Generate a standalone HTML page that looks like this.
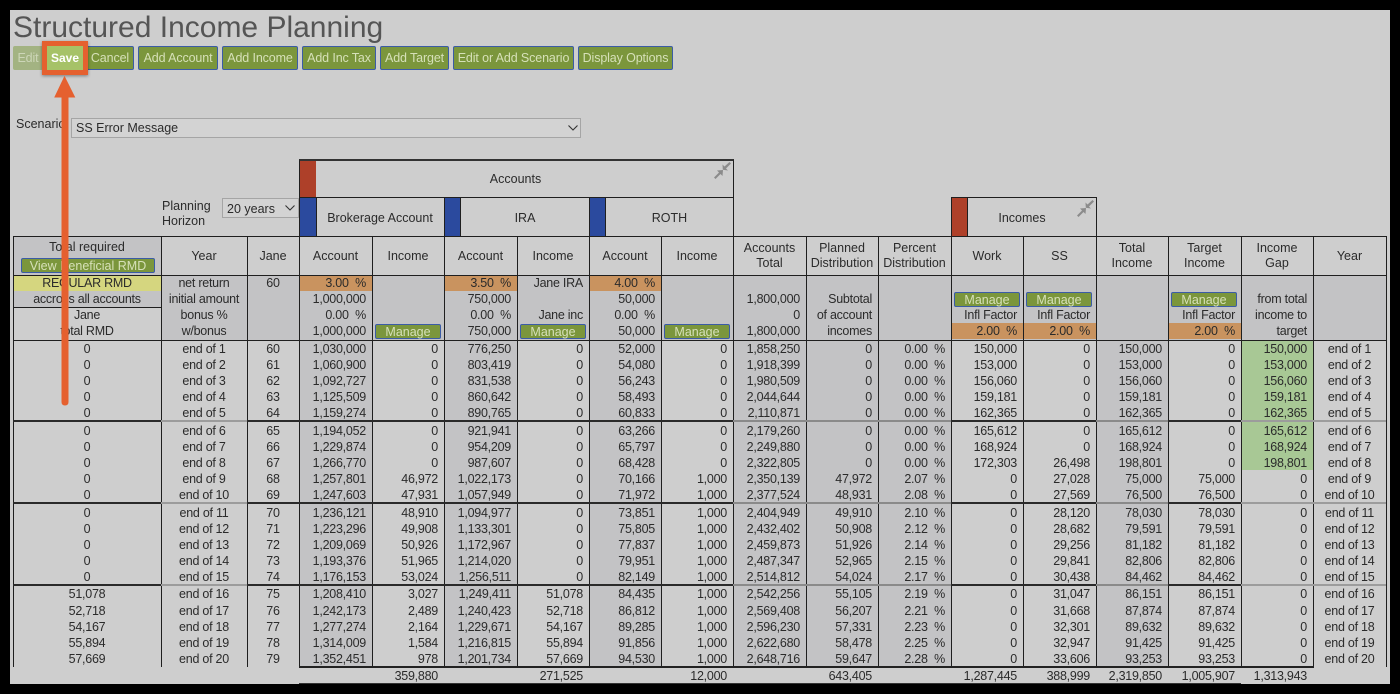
<!DOCTYPE html>
<html><head><meta charset="utf-8"><title>Structured Income Planning</title>
<style>
*{box-sizing:border-box}
html,body{margin:0;padding:0;background:#000;width:1400px;height:694px;overflow:hidden}
body{font-family:"Liberation Sans",sans-serif;font-size:12px;color:#2b2b2b}
#p{position:absolute;left:10px;top:10px;width:1380px;height:674px;background:#cecece}
.a{position:absolute}
.b{position:absolute;top:46px;height:24px;background:#7b963c;border:1.5px solid #3b5ca6;border-radius:2px;color:#d6e0b8;font-size:12.5px;letter-spacing:-.12px;line-height:23px;text-align:center;white-space:nowrap}
.m{position:absolute;height:15px;width:66px;background:#7b963c;border:1.5px solid #3b5ca6;border-radius:2px;color:#d6e0b8;font-size:12.5px;line-height:14px;text-align:center}
.s{position:absolute;background:#c3c3c5}
.o{position:absolute;background:#c9935f}
.v{position:absolute;top:236px;height:431px;width:1px;background:#1f1f1f}
.h{position:absolute;height:2px}
.r{position:absolute;left:13px;height:16px;line-height:16px;font-size:12.5px;letter-spacing:-.25px;display:grid;grid-template-columns:148px 86px 52px 73px 72px 73px 72px 72px 72px 73px 72px 73px 72px 73px 72px 73px 72px 73px;white-space:pre}
.r i{font-style:normal;text-align:right;padding-right:6px}
.r i:nth-child(1),.r i:nth-child(2),.r i:nth-child(3),.r i:nth-child(18){text-align:center;padding-right:0}
.t{position:absolute;text-align:center;font-size:12.5px;line-height:14px;white-space:nowrap}
.hd{position:absolute;top:237px;height:38px;display:flex;align-items:center;justify-content:center;text-align:center;font-size:12.5px;line-height:15px}
</style></head><body>
<div id="p"></div>

<div class="a" style="left:13px;top:10px;font-size:30px;line-height:36px;color:#555;white-space:nowrap">Structured Income Planning</div>

<div class="b" style="left:13px;width:30px;background:#a3b382;border-color:#a3b382;color:#cdd6b8">Edit</div>
<div class="b" style="left:86px;width:48px">Cancel</div>
<div class="b" style="left:138px;width:80px">Add Account</div>
<div class="b" style="left:222px;width:76px">Add Income</div>
<div class="b" style="left:302px;width:74px">Add Inc Tax</div>
<div class="b" style="left:380px;width:69px">Add Target</div>
<div class="b" style="left:453px;width:121px">Edit or Add Scenario</div>
<div class="b" style="left:578px;width:95px">Display Options</div>
<div class="a" style="left:42px;top:41px;width:46px;height:34px;border:5px solid #e5602f;background:#a6c267;color:#fff;font-weight:bold;font-size:12px;line-height:24px;text-align:center;box-shadow:0 1px 3px rgba(0,0,0,.4)">Save</div>

<div class="a" style="left:16px;top:117px;font-size:12.5px;line-height:15px">Scenario</div>
<div class="a" style="left:71px;top:118px;width:510px;height:20px;background:#d3d3d3;border:1px solid #a5a5a5;font-size:12.5px;line-height:19px;padding-left:4px">SS Error Message</div>
<svg class="a" style="left:567px;top:124px" width="12" height="8"><path d="M1.500 1.500L6 6L10.500 1.500" fill="none" stroke="#333" stroke-width="1.100"/></svg>

<div class="a" style="left:162px;top:199px;font-size:12.5px;line-height:14.5px">Planning<br>Horizon</div>
<div class="a" style="left:222px;top:198px;width:77px;height:20px;background:#d3d3d3;border:1px solid #a5a5a5;font-size:12.5px;line-height:20px;padding-left:4px">20 years</div>
<svg class="a" style="left:284px;top:204px" width="12" height="8"><path d="M1.500 1.500L6 6L10.500 1.500" fill="none" stroke="#333" stroke-width="1.100"/></svg>

<!-- group header boxes -->
<div class="a" style="left:299px;top:159px;width:435px;height:78px;border:1px solid #1f1f1f;border-top:2px solid #333"></div>
<div class="a" style="left:299px;top:197px;width:435px;height:1px;background:#1f1f1f"></div>
<div class="a" style="left:300px;top:161px;width:16px;height:36px;background:#ae4029"></div>
<div class="a" style="left:300px;top:198px;width:16px;height:38px;background:#2b4a9e"></div>
<div class="a" style="left:444px;top:198px;width:17px;height:38px;background:#2b4a9e;border-left:1px solid #1f1f1f;border-right:1px solid #1f1f1f"></div>
<div class="a" style="left:589px;top:198px;width:17px;height:38px;background:#2b4a9e;border-left:1px solid #1f1f1f;border-right:1px solid #1f1f1f"></div>
<div class="a" style="left:316px;top:198px;width:1px;height:38px;background:#1f1f1f"></div>
<div class="t" style="left:316px;width:399px;top:172px">Accounts</div>
<div class="t" style="left:316px;width:128px;top:211px">Brokerage Account</div>
<div class="t" style="left:461px;width:128px;top:211px">IRA</div>
<div class="t" style="left:606px;width:127px;top:211px">ROTH</div>
<svg class="a" style="left:713px;top:161px" width="19" height="19"><g fill="#8b8b8b"><path d="M1 16.5L6 11.500L4 9.500L10 9L9.500 15L7.500 13L2.500 18Z"/><path d="M18 2.500L13 7.500L15 9.500L9.800 8.800L9.500 3.500L11.500 5.500L16.500 1Z"/></g></svg>

<div class="a" style="left:951px;top:197px;width:146px;height:40px;border:1px solid #1f1f1f"></div>
<div class="a" style="left:952px;top:198px;width:16px;height:38px;background:#ae4029;border-right:1px solid #1f1f1f"></div>
<div class="t" style="left:968px;width:108px;top:211px">Incomes</div>
<svg class="a" style="left:1076px;top:199px" width="19" height="19"><g fill="#8b8b8b"><path d="M1 16.5L6 11.500L4 9.500L10 9L9.500 15L7.500 13L2.500 18Z"/><path d="M18 2.500L13 7.500L15 9.500L9.800 8.800L9.500 3.500L11.500 5.500L16.500 1Z"/></g></svg>

<!-- shading -->
<div class="s" style="left:13px;top:237px;width:148px;height:38px"></div>
<div class="s" style="left:161px;top:275px;width:1225px;height:65px"></div>
<div class="a" style="left:13px;top:275px;width:148px;height:16px;background:#d5d67f"></div>
<div class="s" style="left:13px;top:291px;width:148px;height:16px"></div>
<div class="s" style="left:299px;top:340px;width:73px;height:327px"></div>
<div class="s" style="left:444px;top:340px;width:73px;height:327px"></div>
<div class="s" style="left:589px;top:340px;width:72px;height:327px"></div>
<div class="s" style="left:733px;top:340px;width:218px;height:327px"></div>
<div class="s" style="left:1096px;top:340px;width:72px;height:327px"></div>
<div class="a" style="left:1241px;top:340px;width:72px;height:130px;background:#a8c895"></div>
<div class="o" style="left:299px;top:276px;width:73px;height:15px"></div>
<div class="o" style="left:444px;top:276px;width:73px;height:15px"></div>
<div class="o" style="left:589px;top:276px;width:72px;height:15px"></div>
<div class="o" style="left:951px;top:323px;width:72px;height:16px"></div>
<div class="o" style="left:1023px;top:323px;width:73px;height:16px"></div>
<div class="o" style="left:1168px;top:323px;width:73px;height:16px"></div>

<!-- lines -->
<div class="a" style="left:13px;top:236px;width:1374px;height:1px;background:#1f1f1f"></div>
<div class="a" style="left:13px;top:275px;width:1374px;height:1px;background:#1f1f1f"></div>
<div class="a" style="left:13px;top:340px;width:1374px;height:1px;background:#1f1f1f"></div>
<div class="a" style="left:13px;top:307px;width:148px;height:1px;background:#1f1f1f"></div>
<div class="v" style="left:13px"></div><div class="v" style="left:161px"></div><div class="v" style="left:247px"></div><div class="v" style="left:299px"></div><div class="v" style="left:372px"></div><div class="v" style="left:444px"></div><div class="v" style="left:517px"></div><div class="v" style="left:589px"></div><div class="v" style="left:661px"></div><div class="v" style="left:733px"></div><div class="v" style="left:806px"></div><div class="v" style="left:878px"></div><div class="v" style="left:951px"></div><div class="v" style="left:1023px"></div><div class="v" style="left:1096px"></div><div class="v" style="left:1168px"></div><div class="v" style="left:1241px"></div><div class="v" style="left:1313px"></div><div class="v" style="left:1386px"></div>

<div class="h" style="left:13px;top:420px;width:1373px;background:#2a2a2a"></div>
<div class="h" style="left:161px;top:420px;width:86px;background:#9c9c9c"></div>
<div class="h" style="left:733px;top:420px;width:218px;background:#8a8a8a"></div>
<div class="h" style="left:1096px;top:420px;width:72px;background:#8a8a8a"></div>
<div class="h" style="left:1241px;top:420px;width:145px;background:#9c9c9c"></div>
<div class="h" style="left:13px;top:502px;width:1373px;background:#2a2a2a"></div>
<div class="h" style="left:161px;top:502px;width:86px;background:#9c9c9c"></div>
<div class="h" style="left:733px;top:502px;width:218px;background:#8a8a8a"></div>
<div class="h" style="left:1096px;top:502px;width:72px;background:#8a8a8a"></div>
<div class="h" style="left:1241px;top:502px;width:145px;background:#9c9c9c"></div>
<div class="h" style="left:13px;top:584px;width:1373px;background:#2a2a2a"></div>
<div class="h" style="left:161px;top:584px;width:86px;background:#9c9c9c"></div>
<div class="h" style="left:733px;top:584px;width:218px;background:#8a8a8a"></div>
<div class="h" style="left:1096px;top:584px;width:72px;background:#8a8a8a"></div>
<div class="h" style="left:1241px;top:584px;width:145px;background:#9c9c9c"></div>
<div class="h" style="left:299px;top:666px;width:1015px;background:#222"></div>
<div class="a" style="left:299px;top:683px;width:942px;height:1px;background:#333"></div>

<!-- table header -->
<div class="t" style="left:13px;width:148px;top:240px">Total required</div>
<div class="m" style="left:21px;top:258px;width:134px">View Beneficial RMD</div>
<div class="hd" style="left:161px;width:86px">Year</div>
<div class="hd" style="left:247px;width:52px">Jane</div>
<div class="hd" style="left:299px;width:73px">Account</div>
<div class="hd" style="left:372px;width:72px">Income</div>
<div class="hd" style="left:444px;width:73px">Account</div>
<div class="hd" style="left:517px;width:72px">Income</div>
<div class="hd" style="left:589px;width:72px">Account</div>
<div class="hd" style="left:661px;width:72px">Income</div>
<div class="hd" style="left:733px;width:73px">Accounts<br>Total</div>
<div class="hd" style="left:806px;width:72px">Planned<br>Distribution</div>
<div class="hd" style="left:878px;width:73px">Percent<br>Distribution</div>
<div class="hd" style="left:951px;width:72px">Work</div>
<div class="hd" style="left:1023px;width:73px">SS</div>
<div class="hd" style="left:1096px;width:72px">Total<br>Income</div>
<div class="hd" style="left:1168px;width:73px">Target<br>Income</div>
<div class="hd" style="left:1241px;width:72px">Income<br>Gap</div>
<div class="hd" style="left:1313px;width:73px">Year</div>

<!-- band rows -->
<div class="r" style="top:275px"><i>REGULAR RMD</i><i>net return</i><i>60</i><i>3.00  %</i><i></i><i>3.50  %</i><i>Jane IRA</i><i>4.00  %</i><i></i><i></i><i></i><i></i><i></i><i></i><i></i><i></i><i></i><i></i></div>
<div class="r" style="top:291px"><i>accross all accounts</i><i>initial amount</i><i></i><i>1,000,000</i><i></i><i>750,000</i><i></i><i>50,000</i><i></i><i>1,800,000</i><i>Subtotal</i><i></i><i></i><i></i><i></i><i></i><i>from total</i><i></i></div>
<div class="r" style="top:307px"><i>Jane</i><i>bonus %</i><i></i><i>0.00  %</i><i></i><i>0.00  %</i><i>Jane inc</i><i>0.00  %</i><i></i><i>0</i><i>of account</i><i></i><i></i><i>Infl Factor</i><i></i><i>Infl Factor</i><i>income to</i><i></i></div>
<div class="r" style="top:323px"><i>total RMD</i><i>w/bonus</i><i></i><i>1,000,000</i><i></i><i>750,000</i><i></i><i>50,000</i><i></i><i>1,800,000</i><i>incomes</i><i></i><i>2.00  %</i><i>2.00  %</i><i></i><i>2.00  %</i><i>target</i><i></i></div>
<div class="a" style="left:951px;top:307px;width:72px;height:16px;line-height:16px;font-size:12.5px;letter-spacing:-.25px;text-align:right;padding-right:6px">Infl Factor</div>
<div class="m" style="left:375px;top:324px">Manage</div>
<div class="m" style="left:520px;top:324px">Manage</div>
<div class="m" style="left:664px;top:324px">Manage</div>
<div class="m" style="left:954px;top:292px">Manage</div>
<div class="m" style="left:1026px;top:292px">Manage</div>
<div class="m" style="left:1171px;top:292px">Manage</div>

<!-- data rows -->
<div class="r" style="top:341px"><i>0</i><i>end of 1</i><i>60</i><i>1,030,000</i><i>0</i><i>776,250</i><i>0</i><i>52,000</i><i>0</i><i>1,858,250</i><i>0</i><i>0.00  %</i><i>150,000</i><i>0</i><i>150,000</i><i>0</i><i>150,000</i><i>end of 1</i></div>
<div class="r" style="top:357px"><i>0</i><i>end of 2</i><i>61</i><i>1,060,900</i><i>0</i><i>803,419</i><i>0</i><i>54,080</i><i>0</i><i>1,918,399</i><i>0</i><i>0.00  %</i><i>153,000</i><i>0</i><i>153,000</i><i>0</i><i>153,000</i><i>end of 2</i></div>
<div class="r" style="top:373px"><i>0</i><i>end of 3</i><i>62</i><i>1,092,727</i><i>0</i><i>831,538</i><i>0</i><i>56,243</i><i>0</i><i>1,980,509</i><i>0</i><i>0.00  %</i><i>156,060</i><i>0</i><i>156,060</i><i>0</i><i>156,060</i><i>end of 3</i></div>
<div class="r" style="top:389px"><i>0</i><i>end of 4</i><i>63</i><i>1,125,509</i><i>0</i><i>860,642</i><i>0</i><i>58,493</i><i>0</i><i>2,044,644</i><i>0</i><i>0.00  %</i><i>159,181</i><i>0</i><i>159,181</i><i>0</i><i>159,181</i><i>end of 4</i></div>
<div class="r" style="top:405px"><i>0</i><i>end of 5</i><i>64</i><i>1,159,274</i><i>0</i><i>890,765</i><i>0</i><i>60,833</i><i>0</i><i>2,110,871</i><i>0</i><i>0.00  %</i><i>162,365</i><i>0</i><i>162,365</i><i>0</i><i>162,365</i><i>end of 5</i></div>
<div class="r" style="top:423px"><i>0</i><i>end of 6</i><i>65</i><i>1,194,052</i><i>0</i><i>921,941</i><i>0</i><i>63,266</i><i>0</i><i>2,179,260</i><i>0</i><i>0.00  %</i><i>165,612</i><i>0</i><i>165,612</i><i>0</i><i>165,612</i><i>end of 6</i></div>
<div class="r" style="top:439px"><i>0</i><i>end of 7</i><i>66</i><i>1,229,874</i><i>0</i><i>954,209</i><i>0</i><i>65,797</i><i>0</i><i>2,249,880</i><i>0</i><i>0.00  %</i><i>168,924</i><i>0</i><i>168,924</i><i>0</i><i>168,924</i><i>end of 7</i></div>
<div class="r" style="top:455px"><i>0</i><i>end of 8</i><i>67</i><i>1,266,770</i><i>0</i><i>987,607</i><i>0</i><i>68,428</i><i>0</i><i>2,322,805</i><i>0</i><i>0.00  %</i><i>172,303</i><i>26,498</i><i>198,801</i><i>0</i><i>198,801</i><i>end of 8</i></div>
<div class="r" style="top:471px"><i>0</i><i>end of 9</i><i>68</i><i>1,257,801</i><i>46,972</i><i>1,022,173</i><i>0</i><i>70,166</i><i>1,000</i><i>2,350,139</i><i>47,972</i><i>2.07  %</i><i>0</i><i>27,028</i><i>75,000</i><i>75,000</i><i>0</i><i>end of 9</i></div>
<div class="r" style="top:487px"><i>0</i><i>end of 10</i><i>69</i><i>1,247,603</i><i>47,931</i><i>1,057,949</i><i>0</i><i>71,972</i><i>1,000</i><i>2,377,524</i><i>48,931</i><i>2.08  %</i><i>0</i><i>27,569</i><i>76,500</i><i>76,500</i><i>0</i><i>end of 10</i></div>
<div class="r" style="top:505px"><i>0</i><i>end of 11</i><i>70</i><i>1,236,121</i><i>48,910</i><i>1,094,977</i><i>0</i><i>73,851</i><i>1,000</i><i>2,404,949</i><i>49,910</i><i>2.10  %</i><i>0</i><i>28,120</i><i>78,030</i><i>78,030</i><i>0</i><i>end of 11</i></div>
<div class="r" style="top:521px"><i>0</i><i>end of 12</i><i>71</i><i>1,223,296</i><i>49,908</i><i>1,133,301</i><i>0</i><i>75,805</i><i>1,000</i><i>2,432,402</i><i>50,908</i><i>2.12  %</i><i>0</i><i>28,682</i><i>79,591</i><i>79,591</i><i>0</i><i>end of 12</i></div>
<div class="r" style="top:537px"><i>0</i><i>end of 13</i><i>72</i><i>1,209,069</i><i>50,926</i><i>1,172,967</i><i>0</i><i>77,837</i><i>1,000</i><i>2,459,873</i><i>51,926</i><i>2.14  %</i><i>0</i><i>29,256</i><i>81,182</i><i>81,182</i><i>0</i><i>end of 13</i></div>
<div class="r" style="top:553px"><i>0</i><i>end of 14</i><i>73</i><i>1,193,376</i><i>51,965</i><i>1,214,020</i><i>0</i><i>79,951</i><i>1,000</i><i>2,487,347</i><i>52,965</i><i>2.15  %</i><i>0</i><i>29,841</i><i>82,806</i><i>82,806</i><i>0</i><i>end of 14</i></div>
<div class="r" style="top:569px"><i>0</i><i>end of 15</i><i>74</i><i>1,176,153</i><i>53,024</i><i>1,256,511</i><i>0</i><i>82,149</i><i>1,000</i><i>2,514,812</i><i>54,024</i><i>2.17  %</i><i>0</i><i>30,438</i><i>84,462</i><i>84,462</i><i>0</i><i>end of 15</i></div>
<div class="r" style="top:586px"><i>51,078</i><i>end of 16</i><i>75</i><i>1,208,410</i><i>3,027</i><i>1,249,411</i><i>51,078</i><i>84,435</i><i>1,000</i><i>2,542,256</i><i>55,105</i><i>2.19  %</i><i>0</i><i>31,047</i><i>86,151</i><i>86,151</i><i>0</i><i>end of 16</i></div>
<div class="r" style="top:603px"><i>52,718</i><i>end of 17</i><i>76</i><i>1,242,173</i><i>2,489</i><i>1,240,423</i><i>52,718</i><i>86,812</i><i>1,000</i><i>2,569,408</i><i>56,207</i><i>2.21  %</i><i>0</i><i>31,668</i><i>87,874</i><i>87,874</i><i>0</i><i>end of 17</i></div>
<div class="r" style="top:619px"><i>54,167</i><i>end of 18</i><i>77</i><i>1,277,274</i><i>2,164</i><i>1,229,671</i><i>54,167</i><i>89,285</i><i>1,000</i><i>2,596,230</i><i>57,331</i><i>2.23  %</i><i>0</i><i>32,301</i><i>89,632</i><i>89,632</i><i>0</i><i>end of 18</i></div>
<div class="r" style="top:635px"><i>55,894</i><i>end of 19</i><i>78</i><i>1,314,009</i><i>1,584</i><i>1,216,815</i><i>55,894</i><i>91,856</i><i>1,000</i><i>2,622,680</i><i>58,478</i><i>2.25  %</i><i>0</i><i>32,947</i><i>91,425</i><i>91,425</i><i>0</i><i>end of 19</i></div>
<div class="r" style="top:651px"><i>57,669</i><i>end of 20</i><i>79</i><i>1,352,451</i><i>978</i><i>1,201,734</i><i>57,669</i><i>94,530</i><i>1,000</i><i>2,648,716</i><i>59,647</i><i>2.28  %</i><i>0</i><i>33,606</i><i>93,253</i><i>93,253</i><i>0</i><i>end of 20</i></div>
<div class="r" style="top:668px"><i></i><i></i><i></i><i></i><i>359,880</i><i></i><i>271,525</i><i></i><i>12,000</i><i></i><i>643,405</i><i></i><i>1,287,445</i><i>388,999</i><i>2,319,850</i><i>1,005,907</i><i>1,313,943</i><i></i></div>

<!-- arrow -->
<svg class="a" style="left:50px;top:74px" width="30" height="334"><path d="M14.500 3L24.500 23H18V328Q18 331 15 331Q12 331 12 328V23H5Z" fill="#e5602f" stroke="#e5602f" stroke-width="1"/></svg>
</body></html>
